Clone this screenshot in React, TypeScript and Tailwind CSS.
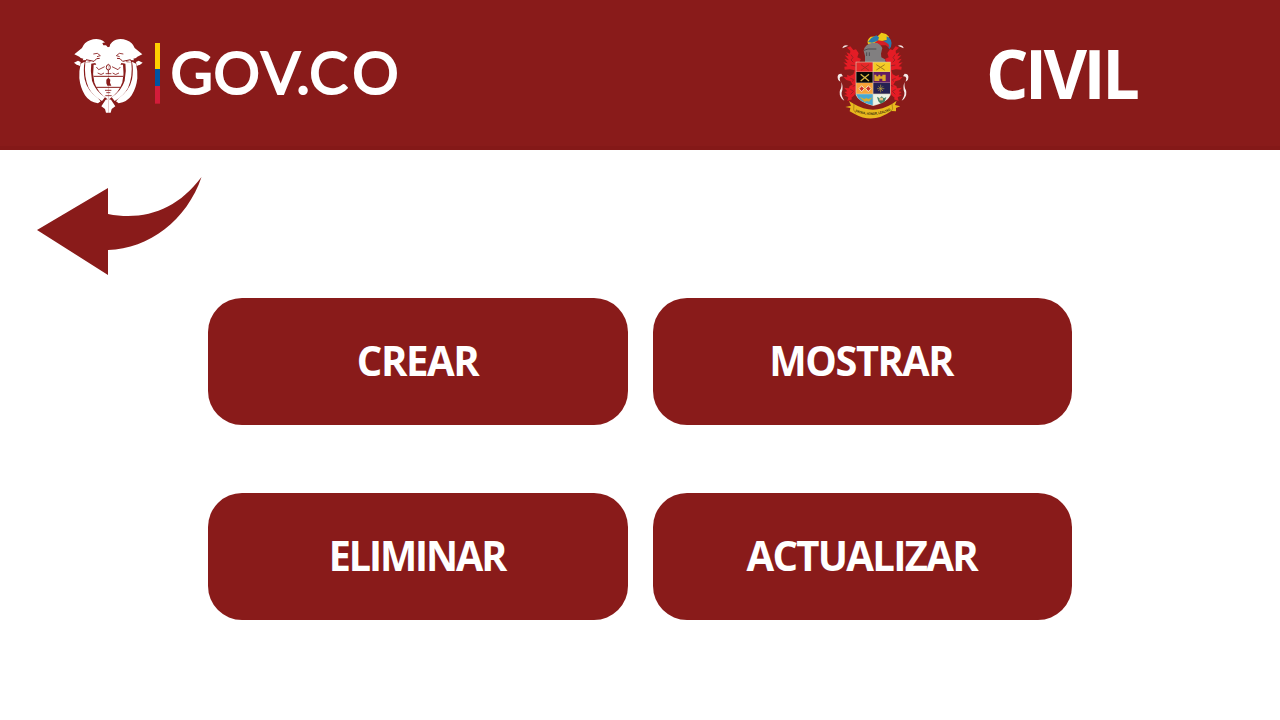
import type { ReactNode } from "react";

function CrestHalf() {
  return (
    <g>
      <path d="M127 60 L124 48 Q118 34 104 29 Q88 24 72 31 Q54 38 48 54 L25 73 L40 80 L44 84 L52 86 L50 91 L62 90 L58 97 L74 94 L70 102 L88 99 L92 107 L127 107 Z" />
      <path d="M24 98 L36 92 L44 96 L42 108 L30 103 Z" />
      <path d="M44 101 L56 95 Q51 118 56 148 Q63 181 96 205 L104 214 L96 220 Q70 216 57 196 Q43 174 40 145 Q39 120 44 101 Z" />
      <path d="M58 97 L76 97 Q72 125 78 152 Q87 181 117 202 L108 213 Q82 199 68 174 Q53 139 58 97 Z" />
      <path d="M83 104 H127 V209 Q95 190 85 157 Q79 130 83 104 Z" />
      <path d="M127 207 L119 209 L106 229 L117 237 L120 248 H127 Z" />
    </g>
  );
}

function ColombiaCrest() {
  return (
    <svg viewBox="0 0 300 270" className="h-[90px] w-[100px] shrink-0" aria-label="Escudo de Colombia">
      <g fill="#fff">
        <CrestHalf />
        <g transform="translate(254 0) scale(-1 1)">
          <CrestHalf />
        </g>
        <path d="M121 50 h12 v50 h-12z" />
      </g>
      <path d="M109 39 L119 37 L130 42 L132 49 L126 52 L120 46 L112 46 Z" fill="#891b1a" />
      <g fill="none" stroke="#891b1a" strokeWidth="3">
        <path d="M83 139 H171 M89 172 H165" />
        <path d="M60 89 L84 94 L92 86 L101 85 M194 89 L170 94 L162 86 L153 85" />
        <path d="M82 72 L94 70 L103 77 L93 80 M172 72 L160 70 L151 77 L161 80" strokeWidth="2.5" />
        <ellipse cx="127" cy="112" rx="6" ry="8" />
        <path d="M127 120 V132 M119 131 H136 M91 111 L98 119 L116 110 M163 111 L156 119 L138 110" strokeWidth="2.5" />
        <path d="M95 129 Q106 138 114 129 M159 129 Q148 138 140 129 M117 181 H136 M121 188 H133 M118 197 H137" strokeWidth="2.5" />
      </g>
      <path d="M121 149 L127 143 L133 149 L132 158 L136 167 L124 167 L121 160 Z" fill="#891b1a" />
      <path fill="#ffce00" d="M267 39h15v78h-15z" />
      <path fill="#0053a0" d="M267 117h15v51h-15z" />
      <path fill="#d31c3a" d="M267 168h15v53h-15z" />
    </svg>
  );
}

function GovWordmark() {
  return (
    <svg viewBox="166 30 240 90" className="h-[90px] w-[240px] shrink-0">
      <text
        x="170.4 213.5 261 296.2 309.2 352.2"
        y="94.2"
        fill="#fff"
        stroke="#fff"
        strokeWidth="2"
        fontFamily="Lato, sans-serif"
        fontSize="58"
      >
        GOV.CO
      </text>
    </svg>
  );
}

function Mantling() {
  return (
    <g>
      <path fill="#e41c25" d="M57 65 L67 61 L76 72 L84 70 L92 82 L88 94 L99 99 L94 109 L84 112 L84 155 L90 165 L88 190 L79 208 L70 215 L72 220 L58 225 L61 214 L48 207 L58 205 L49 198 L58 196 L48 185 L63 187 L65 180 L74 176 L68 166 L55 162 L46 153 L58 154 L57 146 L66 150 L76 145 L80 133 L66 130 L50 131 L49 122 L58 121 L46 109 L59 112 L49 98 L63 103 L50 88 L62 91 L55 79 L66 83 L67 74 Z" />
      <path d="M61 59 Q46 55 43 67 L52 63 Z M40 143 Q27 143 29 156 Q29 164 37 167 L35 157 Q36 150 45 151 Z M40 168 Q42 184 36 193 Q32 206 42 219 L49 224 Q39 209 41 199 Q47 184 40 168 Z" fill="#f4e9e7" />
      <path d="M69 86 L75 95 L69 102 L76 109 M68 117 L83 120 M67 157 L77 161 L73 167 M67 190 L77 196 L68 205 M74 181 L82 178" fill="none" stroke="#9f2024" strokeWidth="3" />
    </g>
  );
}

function EngineersCrest() {
  return (
    <svg viewBox="0 0 270 294" className="h-[98px] w-[90px] shrink-0" aria-label="Escudo militar">
      <Mantling />
      <g transform="translate(270 0) scale(-1 1)">
        <Mantling />
      </g>
      <path d="M120 54 Q115 42 128 32 L149 31 L160 20 L174 24 L183 32 L178 42 L162 45 L145 55 Z" fill="#edc817" />
      <path d="M130 36 L145 28 L153 34 L150 44 L132 50 L120 48 Z M176 31 Q196 40 189 62 L184 69 L174 53 L162 46 L176 43 Z" fill="#287bb0" />
      <path d="M139 50 L151 43 L168 46 L181 54 L185 65 L173 58 L158 58 L149 52 Z" fill="#d61d26" />
      <path d="M111 108 V90 L107 74 Q110 54 134 50 Q156 49 163 66 L159 83 L160 94 L171 100 L173 109 Z" fill="#817f80" />
      <path d="M108 73 L120 69 L145 69 M116 79 V90 M124 79 V90" fill="none" stroke="#454246" strokeWidth="2.5" />
      <path d="M83 107 H188 V207 Q180 228 136 240 Q91 228 83 207 Z" fill="#d8cbb5" />
      <path fill="#e72728" d="M85 109h49v28H85z" />
      <path fill="#f5cb24" d="M136 109h50v28h-50z" />
      <path fill="#090807" d="M85 138h49v32H85z" />
      <path fill="#611b63" d="M136 138h50v32h-50z" />
      <path fill="#f8a43a" d="M85 171h49v32H85z" />
      <path fill="#252152" d="M136 171h50v32h-50z" />
      <path fill="#46a8d5" d="M85 205h49v33Q90 228 85 205z" />
      <path fill="#edf3e5" d="M136 205h50q-3 23-50 33z" />
      <path d="M99 116 l24 17 m0-17 l-24 17" stroke="#a52b20" strokeWidth="3" />
      <path d="M145 116 l25 16 m0-16 l-25 16" stroke="#a37d1c" strokeWidth="3" />
      <path d="M98 145 l25 20 m0-20 l-25 20" stroke="#d7b443" strokeWidth="4" />
      <path d="M139 165 v-19h6v5h6v-5h6v5h6v-5h10v19h-10v-7h-9v7z" fill="#dba928" />
      <path d="M101 179 l8 9 -8 9 -8-9z M121 179 l8 9 -8 9 -8-9z" fill="#cc3227" stroke="#f1e6c2" strokeWidth="3" />
      <path d="M158 176v23 m-11-11h22 m-18-7 14 14 m0-14-14 14" stroke="#bda43d" strokeWidth="2" />
      <path d="M94 212 l15 7 6-3 6 3 12-5 -10 13 -6-2 -7 3 -5-5 z" fill="#d7ad32" />
      <path d="M147 212 l8 5 6-6 7 6 7-4 -5 14-12 6-7-7z" fill="#458368" />
      <path d="M154 215h11v8h-11" fill="#e4bf82" />
      <path d="M63 225 L78 234 Q135 268 192 234 L206 224 L201 237 L217 241 L204 246 L204 256 L190 255 Q135 295 80 264 L65 256 L67 246 L52 243 L69 239 Z" fill="#e8b91e" />
      <path d="M78 234 L77 252 L84 262 M192 234 L194 249 L187 258" fill="none" stroke="#9c6c15" strokeWidth="2" />
      <path id="ribbon" d="M82 257 Q135 279 190 252" fill="none" />
      <text fill="#34270b" fontFamily="Liberation Sans, sans-serif" fontSize="10.5" fontWeight="700">
        <textPath href="#ribbon" textLength="109" lengthAdjust="spacingAndGlyphs">PATRIA, HONOR, LEALTAD</textPath>
      </text>
    </svg>
  );
}

function ActionButton({ children }: { children: ReactNode }) {
  return (
    <button className="flex h-[127px] w-[419.5px] items-center justify-center rounded-[34px] bg-[#891b1a] pb-[3px] text-[42px] leading-none font-bold text-white">
      {children}
    </button>
  );
}

export default function App() {
  return (
    <main className="h-screen overflow-hidden bg-white font-['Open_Sans',sans-serif]">
      <header className="flex h-[150px] items-start border-b-4 border-[#841918] bg-[#891b1a] text-white">
        <div className="mt-[30px] ml-[66px] flex">
          <ColombiaCrest />
          <GovWordmark />
        </div>
        <div className="mt-[26px] ml-[422px]">
          <EngineersCrest />
        </div>
        <h1 className="mt-[39px] ml-[68px] origin-left scale-x-[0.98] text-[68px] leading-[68px] font-bold tracking-[-3.5px]">CIVIL</h1>
      </header>
      <button className="mt-[27px] ml-[36px] block" aria-label="Volver">
        <svg viewBox="0 0 166 99" className="h-[99px] w-[166px]">
          <path d="M1 53 L72 11 V37 C108 44 141 33 165.5 0 C151 43 113 72 72 73 V98 Z" fill="#891b1a" />
        </svg>
      </button>
      <section className="mt-[22px] ml-[208px] grid w-[864px] grid-cols-[419.5px_419.5px] gap-x-[25px] gap-y-[68px]">
        <ActionButton><span className="scale-x-[0.955] tracking-[-1.5px]">CREAR</span></ActionButton>
        <ActionButton><span className="-translate-x-px scale-x-[0.945] tracking-[-1.5px]">MOSTRAR</span></ActionButton>
        <ActionButton><span className="-translate-x-px scale-x-[0.94] tracking-[-2.2px]">ELIMINAR</span></ActionButton>
        <ActionButton><span className="-translate-x-px scale-x-[0.955] tracking-[-1.8px]">ACTUALIZAR</span></ActionButton>
      </section>
    </main>
  );
}
